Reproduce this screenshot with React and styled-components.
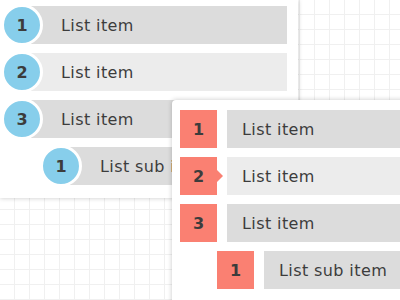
import styled, { createGlobalStyle } from "styled-components";

const GlobalStyle = createGlobalStyle`
  html, body {
    margin: 0;
    padding: 0;
    width: 400px;
    height: 300px;
    overflow: hidden;
    background-color: #fff;
    background-image:
      linear-gradient(to right, #f0f0f0 1px, transparent 1px),
      linear-gradient(to bottom, #f0f0f0 1px, transparent 1px);
    background-size: 15px 15px;
    background-position: -1px -1px;
    font-family: "DejaVu Sans", "Liberation Sans", sans-serif;
  }
`;

const Stage = styled.div`
  display: grid;
  width: 400px;
  height: 300px;
  overflow: hidden;
`;

const Card = styled.div`
  grid-area: 1 / 1;
  align-self: start;
  justify-self: start;
  background: #fff;
  border-radius: 4px;
  box-shadow: 0 0 5px rgba(0, 0, 0, 0.22);
  display: flex;
  flex-direction: column;
  gap: 9px;
`;

const RoundCard = styled(Card)`
  width: 286px;
  padding: 6px 11px 13px 1px;
  border-radius: 0 0 4px 0;
`;

const SquareCard = styled(Card)`
  margin: 100px 0 0 172px;
  width: 260px;
  padding: 10px 0 20px 8px;
`;

const Row = styled.div`
  display: flex;
  align-items: center;
  height: 38px;
  padding-left: ${(p) => (p.$sub ? p.$indent : 0)}px;
`;

const Circle = styled.div`
  flex: none;
  width: 36px;
  height: 36px;
  border: 3px solid #fff;
  border-radius: 50%;
  background: #87ceeb;
  color: #3c3c3c;
  font-size: 16px;
  font-weight: bold;
  display: flex;
  align-items: center;
  justify-content: center;
  margin-right: -12px;
  position: relative;
  z-index: 1;
`;

const Square = styled.div`
  flex: none;
  width: 37px;
  height: 38px;
  background: #fa8072;
  color: #3c3c3c;
  font-size: 16px;
  font-weight: bold;
  display: flex;
  align-items: center;
  justify-content: center;
  margin-right: 10px;
  position: relative;
  &::after {
    content: "";
    display: ${(p) => (p.$active ? "block" : "none")};
    position: absolute;
    left: 100%;
    top: 50%;
    margin-top: -6px;
    border-style: solid;
    border-width: 6px 0 6px 6px;
    border-color: transparent transparent transparent #fa8072;
  }
`;

const Bar = styled.div`
  flex: 1;
  height: 38px;
  display: flex;
  align-items: center;
  white-space: nowrap;
  overflow: hidden;
  background: ${(p) => (p.$active ? "#ececec" : "#dcdcdc")};
  color: #3c3c3c;
  font-size: 16px;
  letter-spacing: 0.4px;
  padding-left: ${(p) => p.$pad}px;
`;

const items = [
  { n: 1, label: "List item" },
  { n: 2, label: "List item", active: true },
  { n: 3, label: "List item" },
  { n: 1, label: "List sub item", sub: true },
];

export default function App() {
  return (
    <>
      <GlobalStyle />
      <Stage>
        <RoundCard>
          {items.map((it, i) => (
            <Row key={i} $sub={it.sub} $indent={39}>
              <Circle>{it.n}</Circle>
              <Bar $active={it.active} $pad={30}>
                {it.label}
              </Bar>
            </Row>
          ))}
        </RoundCard>
        <SquareCard>
          {items.map((it, i) => (
            <Row key={i} $sub={it.sub} $indent={37}>
              <Square $active={it.active}>{it.n}</Square>
              <Bar $active={it.active} $pad={15}>
                {it.label}
              </Bar>
            </Row>
          ))}
        </SquareCard>
      </Stage>
    </>
  );
}
